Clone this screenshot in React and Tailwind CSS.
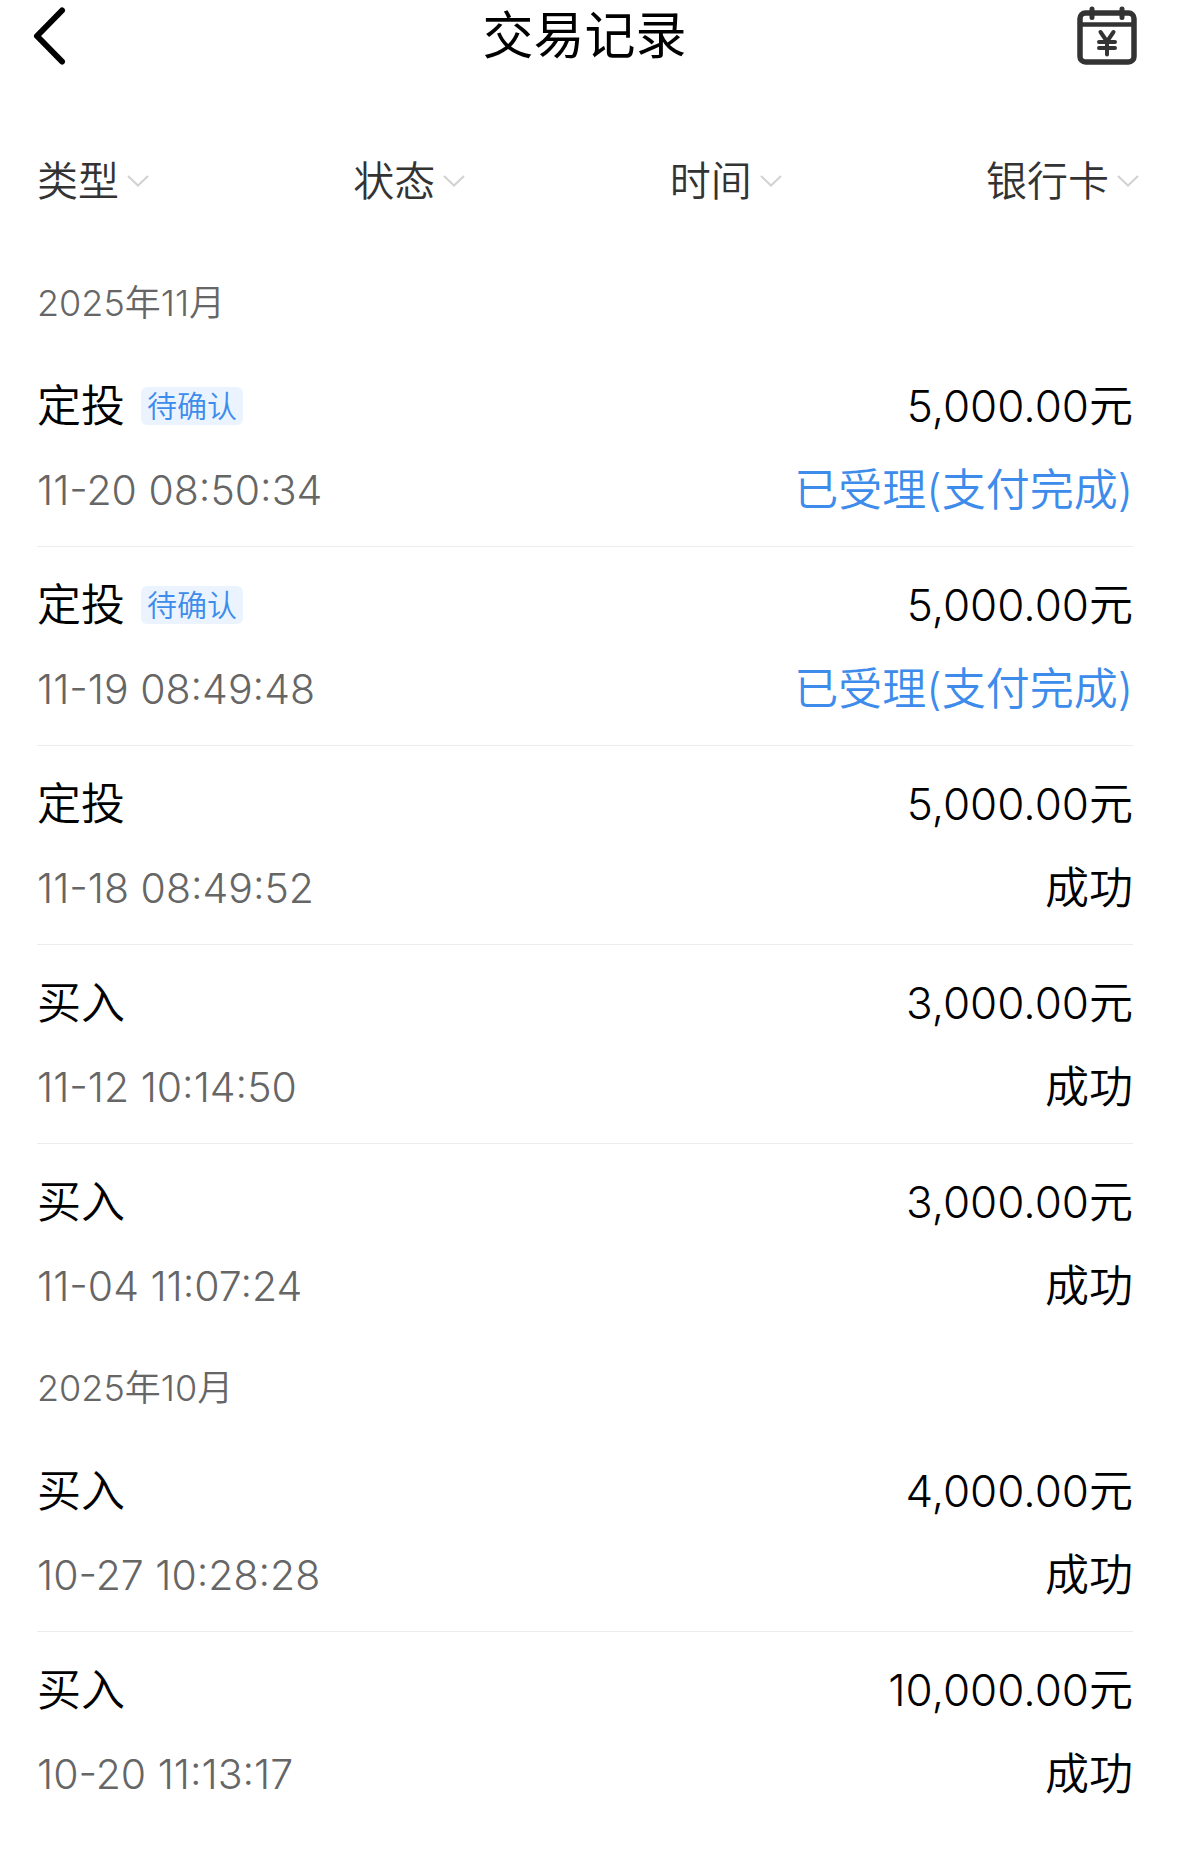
import { useState } from 'react';

const FILTERS = ['类型', '状态', '时间', '银行卡'];

const MONTHS = [
  {
    label: '2025年11月',
    records: [
      { type: '定投', tag: '待确认', time: '11-20 08:50:34', amount: '5,000.00', status: '已受理(支付完成)', pending: true },
      { type: '定投', tag: '待确认', time: '11-19 08:49:48', amount: '5,000.00', status: '已受理(支付完成)', pending: true },
      { type: '定投', time: '11-18 08:49:52', amount: '5,000.00', status: '成功' },
      { type: '买入', time: '11-12 10:14:50', amount: '3,000.00', status: '成功' },
      { type: '买入', time: '11-04 11:07:24', amount: '3,000.00', status: '成功' },
    ],
  },
  {
    label: '2025年10月',
    records: [
      { type: '买入', time: '10-27 10:28:28', amount: '4,000.00', status: '成功' },
      { type: '买入', time: '10-20 11:13:17', amount: '10,000.00', status: '成功' },
    ],
  },
];

function BackIcon() {
  return (
    <svg className="h-[60px] w-9" viewBox="0 0 36 60" fill="none" stroke="currentColor" strokeWidth="6" strokeLinecap="round" strokeLinejoin="round" aria-hidden="true">
      <path d="M30 4.5 5 30l25 25.5" />
    </svg>
  );
}

function CalendarIcon() {
  return (
    <svg className="h-[60px] w-[60px]" viewBox="0 0 60 60" fill="none" stroke="currentColor" strokeWidth="5.5" strokeLinecap="round" strokeLinejoin="round" aria-hidden="true">
      <rect x="3" y="7" width="54" height="49" rx="5.5" />
      <path d="M4 18.500h52" strokeWidth="4.500" strokeLinecap="butt" />
      <path d="M15 3v8.500M45 3v8.500" strokeWidth="5" />
      <path d="m23.500 26 6.500 9.500 6.500-9.500M30 35.500v13M22 36h16M22 42h16" strokeWidth="4" />
    </svg>
  );
}

function ArrowDown() {
  return (
    <svg className="h-3 w-[22px]" viewBox="0 0 22 12" fill="none" stroke="#d2d2d2" strokeWidth="2" aria-hidden="true">
      <path d="m1 1 10 9.500L21 1" />
    </svg>
  );
}

function RecordRow({ record }) {
  return (
    <li className="flex justify-between border-b border-[#ececec] pt-7 pb-[26px] last:border-transparent">
      <div className="flex flex-col gap-6">
        <div className="flex h-[60px] items-center gap-4">
          <span className="text-[44px] leading-[60px]">{record.type}</span>
          {record.tag && (
            <span className="rounded-md bg-[#ebf4fe] px-[6px] text-[30px] leading-[38px] text-[#3d8ceb]">{record.tag}</span>
          )}
        </div>
        <time className="text-[41px] leading-[60px] text-[#666666]">{record.time}</time>
      </div>
      <div className="flex flex-col items-end gap-6">
        <span className="text-[44px] leading-[60px]">{record.amount}元</span>
        <span className={`text-[44px] leading-[60px] ${record.pending ? 'text-[#3d8ceb]' : 'text-black'}`}>
          {record.status}
        </span>
      </div>
    </li>
  );
}

export default function App() {
  const [active, setActive] = useState(null);

  return (
    <div className="min-h-screen bg-white pb-8 font-['Inter','Noto_Sans_CJK_SC',sans-serif] font-[350] text-black">
      <header className="flex h-[72px] items-center justify-between pr-[42px] pl-8">
        <button type="button" aria-label="返回" className="flex w-[60px]">
          <BackIcon />
        </button>
        <h1 className="text-[51px] leading-[72px] font-normal">交易记录</h1>
        <button type="button" aria-label="账单日历" className="text-[#333333]">
          <CalendarIcon />
        </button>
      </header>

      <nav className="flex justify-between pr-10 pl-[37px] pt-[79px] pb-[47px]">
        {FILTERS.map((name) => (
          <button
            key={name}
            type="button"
            aria-haspopup="listbox"
            aria-expanded={active === name}
            onClick={() => setActive(active === name ? null : name)}
            className="flex items-center gap-2 text-[41px] leading-[60px] text-[#333333]"
          >
            {name}
            <ArrowDown />
          </button>
        ))}
      </nav>

      <main className="pr-[46px] pl-[37px]">
        {MONTHS.map((month) => (
          <section key={month.label}>
            <h2 className="text-[36px] leading-[90px] text-[#666666]">{month.label}</h2>
            <ul>
              {month.records.map((record) => (
                <RecordRow key={record.time} record={record} />
              ))}
            </ul>
          </section>
        ))}
      </main>
    </div>
  );
}
